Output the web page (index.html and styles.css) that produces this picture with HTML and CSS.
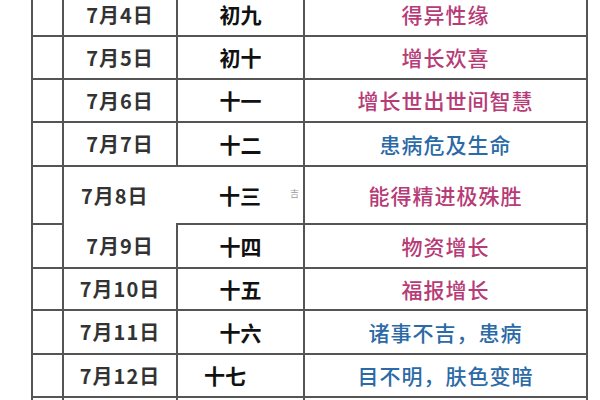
FILE: index.html
```html
<!DOCTYPE html>
<html lang="zh">
<head>
<meta charset="utf-8">
<link rel="stylesheet" href="styles.css">
</head>
<body>
<div class="page">
<table class="cal">
  <colgroup><col class="c1"><col class="c2"><col class="c3"><col class="c4"></colgroup>
  <tr class="r43"><td></td><td class="date">7月4日</td><td class="lunar">初九</td><td class="mean pink">得异性缘</td></tr>
  <tr class="r43"><td></td><td class="date">7月5日</td><td class="lunar">初十</td><td class="mean pink">增长欢喜</td></tr>
  <tr class="r43"><td></td><td class="date">7月6日</td><td class="lunar">十一</td><td class="mean pink">增长世出世间智慧</td></tr>
  <tr class="r44"><td></td><td class="date">7月7日</td><td class="lunar">十二</td><td class="mean blue">患病危及生命</td></tr>
  <tr class="r58"><td></td><td class="date odd">7月8日</td><td class="lunar odd-l">十三<span class="mark">吉</span></td><td class="mean pink">能得精进极殊胜</td></tr>
  <tr class="r44"><td></td><td class="date">7月9日</td><td class="lunar round">十四</td><td class="mean pink">物资增长</td></tr>
  <tr class="r42"><td></td><td class="date">7月10日</td><td class="lunar">十五</td><td class="mean pink">福报增长</td></tr>
  <tr class="r44"><td></td><td class="date">7月11日</td><td class="lunar">十六</td><td class="mean blue">诸事不吉，患病</td></tr>
  <tr class="r43"><td></td><td class="date">7月12日</td><td class="lunar shift">十七</td><td class="mean blue">目不明，肤色变暗</td></tr>
  <tr class="r43"><td></td><td></td><td></td><td></td></tr>
</table>
</div>
</body>
</html>
```
FILE: styles.css
```css
html, body {
  margin: 0;
  padding: 0;
  background: #ffffff;
  overflow: hidden;
}
.page {
  width: 600px;
  height: 400px;
  overflow: hidden;
  position: relative;
}
.cal {
  border-collapse: collapse;
  table-layout: fixed;
  width: 555px;
  margin-left: 31px;
  margin-top: -8px;
  font-family: "Noto Sans CJK SC", "Noto Sans", sans-serif;
}
.c1 { width: 31px; }
.c2 { width: 114px; }
.c3 { width: 127px; }
.c4 { width: 283px; }
.cal td {
  border: 2px solid #555555;
  padding: 0;
  text-align: center;
  vertical-align: middle;
  line-height: 1;
}
.r42 { height: 42px; }
.r43 { height: 43px; }
.r44 { height: 44px; }
.r58 { height: 58px; }
.date {
  font-size: 20px;
  font-weight: 700;
  color: #333333;
  letter-spacing: 1px;
}
.lunar {
  font-size: 21px;
  font-weight: 700;
  color: #111111;
}
.mean {
  font-size: 21px;
  font-weight: 500;
  letter-spacing: 1px;
}
.pink { color: #b63b76; }
.blue { color: #2b6aa6; }
.cal td.odd {
  border-right-style: hidden;
  border-bottom-style: hidden;
  text-align: left;
  padding-left: 17px;
}
.cal td.odd-l {
  position: relative;
}
.mark {
  position: absolute;
  right: 4px;
  top: 22px;
  font-size: 9px;
  font-weight: 400;
  color: #9a9a9a;
}
.cal td.shift {
  text-align: left;
  padding-left: 26px;
}
```
